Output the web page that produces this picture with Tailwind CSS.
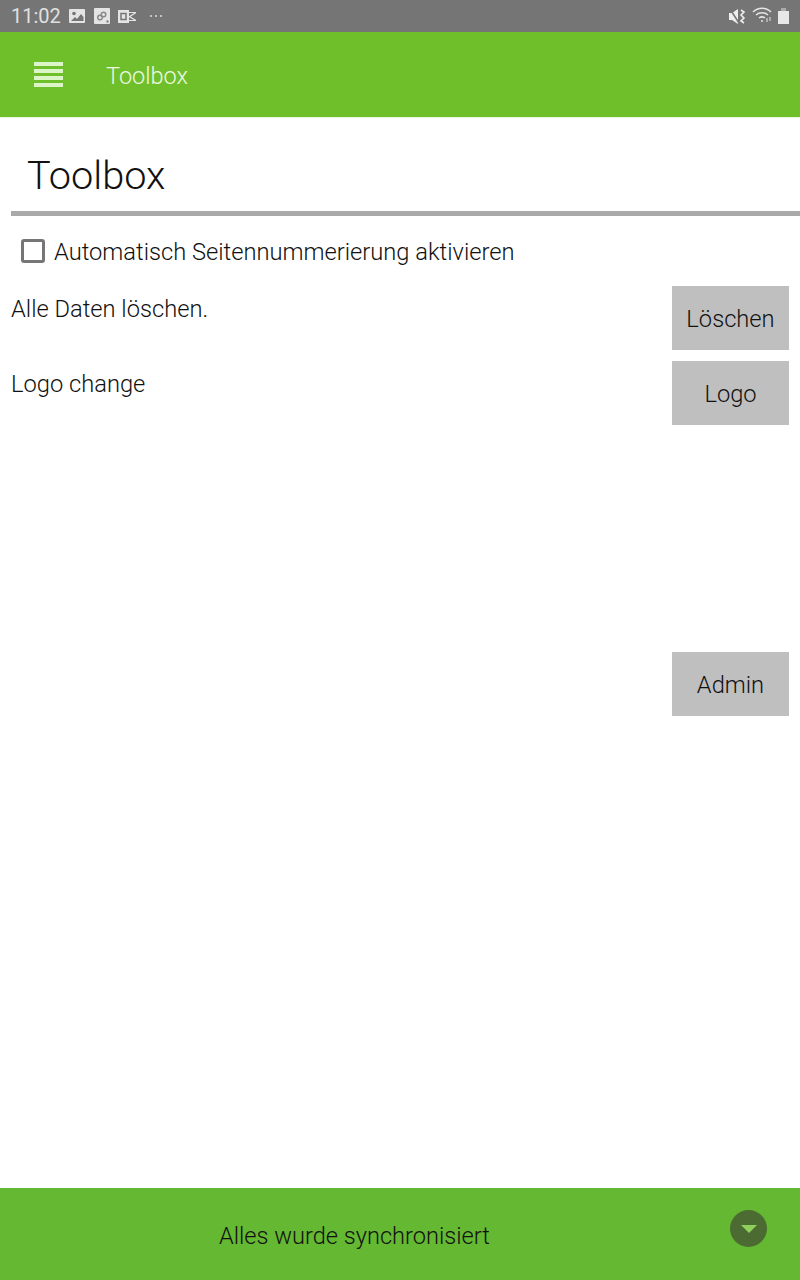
<!DOCTYPE html>
<html><head><meta charset="utf-8"><script src="https://cdn.jsdelivr.net/npm/@tailwindcss/browser@4"></script></head>
<body class="bg-white">
<div class="w-[800px] h-[1280px] flex flex-col font-['Roboto',sans-serif] font-light text-[#111] overflow-hidden">
  <div class="h-[32px] bg-[#757575] flex items-center pl-[11px] pr-[11px] text-[#e0e0e0] shrink-0">
    <span class="text-[20px] font-normal w-[58px]">11:02</span>
    <svg width="16" height="14" viewBox="0 0 16 14"><rect width="16" height="14" rx="1" fill="#e4e4e4"/><circle cx="5" cy="4.500" r="1.800" fill="#757575"/><path d="M2 12l4-4 2 2 4-5 2.500 3v4z" fill="#757575"/></svg>
    <svg class="ml-[9px]" width="16" height="16" viewBox="0 0 16 16"><rect width="16" height="16" rx="1" fill="#e4e4e4"/><circle cx="6" cy="9.500" r="2.300" fill="none" stroke="#8a8a8a" stroke-width="1.500"/><circle cx="9.500" cy="6.500" r="2.300" fill="none" stroke="#8a8a8a" stroke-width="1.500"/><rect x="12.500" y="12.500" width="2" height="2" fill="#757575"/></svg>
    <svg class="ml-[8px]" width="18" height="15" viewBox="0 0 18 15"><rect y="1" width="11" height="13" fill="#e4e4e4"/><rect x="3" y="4.500" width="5" height="6" fill="none" stroke="#757575" stroke-width="1.500"/><path d="M11 3.500h7M11 11.500h7" fill="none" stroke="#e4e4e4" stroke-width="1.200"/><path d="M11 8l7-4.500M11 7.500l7 4" fill="none" stroke="#e4e4e4" stroke-width="1.400"/></svg>
    <div class="ml-[14px] flex gap-[3px]"><span class="w-[2px] h-[2px] bg-[#ddd] rounded-full"></span><span class="w-[2px] h-[2px] bg-[#ddd] rounded-full"></span><span class="w-[2px] h-[2px] bg-[#ddd] rounded-full"></span></div>
    <div class="ml-auto flex items-center gap-[4px]">
      <svg width="18" height="17" viewBox="0 0 18 17"><path d="M0 5h3l6-4v15l-6-4H0z" fill="#eee"/><path d="M1 1l9 14" stroke="#757575" stroke-width="1.500"/><path d="M12 2l3 2-3 3 3 3-3 3 3 2" fill="none" stroke="#eee" stroke-width="1.600"/></svg>
      <svg class="ml-[1px] -mt-[3px]" width="21" height="17" viewBox="0 0 21 17" fill="none" stroke="#e4e4e4" stroke-width="1.500"><path d="M1 6c5-5 13-5 18 0M4 9c3-3 9-3 12 0M7 12c2-1.500 4-1.500 6 0"/><circle cx="10" cy="15" r="1" fill="#e4e4e4" stroke="none"/><path d="M15 12v4M18 11v4" stroke-width="1"/></svg>
      <svg class="ml-[1px]" width="11" height="16" viewBox="0 0 11 16"><rect y="3" width="11" height="13" fill="#e8e8e8"/><rect x="3" width="5" height="3" fill="#aaa"/></svg>
    </div>
  </div>
  <div class="h-[85px] bg-[#6fbf2b] flex items-center shrink-0">
    <div class="ml-[34px] w-[29px] flex flex-col gap-[3px]">
      <span class="h-[4px] bg-[#dcf5c8]"></span><span class="h-[4px] bg-[#dcf5c8]"></span><span class="h-[4px] bg-[#dcf5c8]"></span><span class="h-[4px] bg-[#dcf5c8]"></span>
    </div>
    <span class="ml-[43px] text-[23.500px] text-[#ecf8e0] pt-[4px]">Toolbox</span>
  </div>
  <div class="h-[1px] bg-[#e8f4dc] shrink-0"></div>
  <div class="flex-1 pl-[11px] pr-[11px] flex flex-col">
    <div class="h-[98px] -mr-[11px] border-b-[5px] border-[#a9a9a9] pl-[16px] pt-[30px] shrink-0">
      <h1 class="text-[39.700px] leading-[56px] font-light text-[#111]">Toolbox</h1>
    </div>
    <div class="flex items-center h-[24px] mt-[23px] ml-[10px] shrink-0">
      <span class="w-[24px] h-[24px] border-[3px] border-[#767676] rounded-[3px] shrink-0 -ml-[0.500px]"></span>
      <span class="ml-[9.500px] text-[23.700px] pt-[4px]">Automatisch Seitennummerierung aktivieren</span>
    </div>
    <div class="flex justify-between items-start mt-[23px] shrink-0">
      <span class="text-[23.700px] leading-[46px]">Alle Daten löschen.</span>
      <button class="w-[117px] h-[64px] bg-[#bfbfbf] text-[23.700px] font-light pt-[4px]">Löschen</button>
    </div>
    <div class="flex justify-between items-start mt-[11px] shrink-0">
      <span class="text-[23.700px] leading-[46px]">Logo change</span>
      <button class="w-[117px] h-[64px] bg-[#bfbfbf] text-[23.700px] font-light pt-[4px]">Logo</button>
    </div>
    <div class="flex justify-end mt-[227px] shrink-0">
      <button class="w-[117px] h-[64px] bg-[#bfbfbf] text-[23.700px] font-light pt-[4px]">Admin</button>
    </div>
  </div>
  <div class="h-[92px] bg-[#65b831] flex items-center shrink-0">
    <span class="ml-[219px] text-[23.600px] font-light text-[#111] pt-[6px]">Alles wurde synchronisiert</span>
    <span class="ml-auto mr-[33px] w-[37px] h-[37px] mb-[11px] rounded-full bg-[#4b6b33] flex items-center justify-center">
      <svg width="16" height="8" viewBox="0 0 16 8"><path d="M0 0h16l-8 8z" fill="#8fd05a"/></svg>
    </span>
  </div>
</div>
</body></html>
